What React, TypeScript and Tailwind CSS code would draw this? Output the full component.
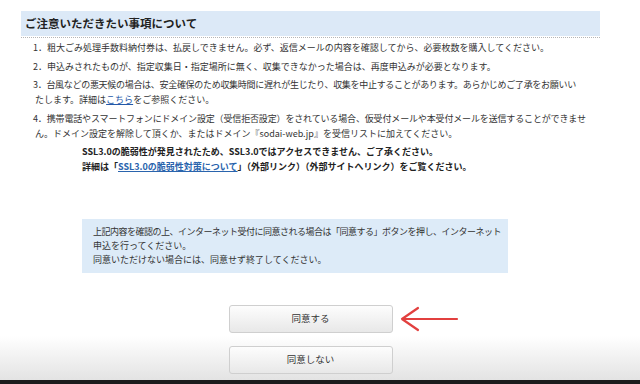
import React from 'react'

function Arrow() {
  return (
    <svg width="60" height="28" viewBox="0 0 60 28" className="absolute left-[170px] top-0" fill="none">
      <path d="M58 14H3M19 3L3 14l16 11" stroke="#e2403f" strokeWidth="2.2" strokeLinecap="round" strokeLinejoin="round" />
    </svg>
  )
}

function AgreeButton({ label }: { label: string }) {
  return (
    <button className="flex h-[28px] w-[164px] items-center justify-center rounded-[3px] border border-[#cfcfcf] bg-[linear-gradient(to_bottom,#fdfdfd,#e8e8e8)] text-[9.5px] text-[#333]">
      {label}
    </button>
  )
}

export default function App() {
  return (
    <div
      className="relative h-[384px] w-[640px] overflow-hidden bg-[linear-gradient(to_bottom,#ffffff_0,#ffffff_336px,#e3e3e3_380px,#1c1c1c_380px)] text-[#333]"
      style={{ fontFamily: '"Noto Sans CJK JP", "Noto Sans", sans-serif' }}
    >
      <div className="ml-[21px] w-[579px] pt-[11px]">
        <div className="border-b border-dotted border-[#b5b5b5] pb-px">
          <div className="flex h-[25px] items-center bg-[#dce9f7] pl-[4px] text-[11.5px] font-bold text-[#222]">
            ご注意いただきたい事項について
          </div>
        </div>

        {/* notice list */}
        <div className="flex flex-col gap-[3.5px] whitespace-nowrap pl-[12px] pt-[2px] text-[9px] leading-[15px]">
          <div>1．粗大ごみ処理手数料納付券は、払戻しできません。必ず、返信メールの内容を確認してから、必要枚数を購入してください。</div>
          <div>2．申込みされたものが、指定収集日・指定場所に無く、収集できなかった場合は、再度申込みが必要となります。</div>
          <div>
            <div className="tracking-[-0.3px]">
              3．台風などの悪天候の場合は、安全確保のため収集時間に遅れが生じたり、収集を中止することがあります。あらかじめご了承をお願いい
            </div>
            <div className="pl-[2px]">
              たします。詳細は
              <a href="#" className="text-[#2458a8] underline">
                こちら
              </a>
              をご参照ください。
            </div>
          </div>
          <div>
            <div className="tracking-[-0.15px]">
              4．携帯電話やスマートフォンにドメイン設定（受信拒否設定）をされている場合、仮受付メールや本受付メールを送信することができませ
            </div>
            <div className="pl-[2px]">ん。ドメイン設定を解除して頂くか、またはドメイン『sodai-web.jp』を受信リストに加えてください。</div>
          </div>
        </div>

        <div className="mt-[3px] whitespace-nowrap pl-[61px] text-[9px] font-bold leading-[15px] text-[#222]">
          <div>SSL3.0の脆弱性が発見されたため、SSL3.0ではアクセスできません、ご了承ください。</div>
          <div>
            詳細は「
            <a href="#" className="text-[#2a64ad] underline">
              SSL3.0の脆弱性対策について
            </a>
            」（外部リンク）（外部サイトへリンク）をご覧ください。
          </div>
        </div>

        <div className="ml-[61px] mt-[45px] w-[426px] whitespace-nowrap bg-[#ddebf8] px-[11px] py-[6px] text-[9px] leading-[14px] text-[#333]">
          <div className="tracking-[-0.5px]">上記内容を確認の上、インターネット受付に同意される場合は「同意する」ボタンを押し、インターネット</div>
          <div>申込を行ってください。</div>
          <div>同意いただけない場合には、同意せず終了してください。</div>
        </div>

        <div className="mt-[32px] flex flex-col items-center gap-[13px]">
          <div className="relative">
            <AgreeButton label="同意する" />
            <Arrow />
          </div>
          <AgreeButton label="同意しない" />
        </div>
      </div>
    </div>
  )
}
